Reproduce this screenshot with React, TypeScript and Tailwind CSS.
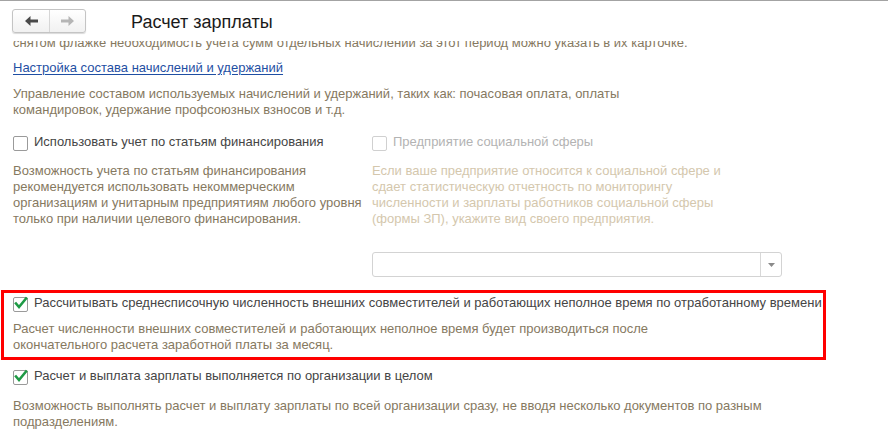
import React from "react";

function Arrow({ dir, color }: { dir: "left" | "right"; color: string }) {
  return (
    <svg width="13" height="10" viewBox="0 0 13 10" className={dir === "right" ? "-scale-x-100" : ""}>
      <polygon points="0,5 5.5,0 5.5,3.5 13,3.5 13,6.5 5.5,6.5 5.5,10" fill={color} />
    </svg>
  );
}

function Checkbox({ checked, disabled }: { checked?: boolean; disabled?: boolean }) {
  return (
    <div
      className={
        "relative mt-[2px] h-[15px] w-[15px] shrink-0 rounded-[2px] border bg-white " +
        (disabled ? "border-[#d0d0d0]" : "border-[#9a9a9a]")
      }
    >
      {checked && (
        <svg width="15" height="15" viewBox="0 0 15 15" className="absolute -left-[1px] -top-[2px]">
          <path d="M3 7.5 L6 11 L13 2.5" stroke="#1e9a45" strokeWidth="2.6" fill="none" strokeLinecap="square" />
        </svg>
      )}
    </div>
  );
}

function Lines({ lines, className }: { lines: string[]; className: string }) {
  return (
    <div className={className}>
      {lines.map((l) => (
        <div key={l} className="whitespace-nowrap">
          {l}
        </div>
      ))}
    </div>
  );
}

export default function App() {
  const note = "text-[#86795f]";
  return (
    <div className="flex h-[434px] w-[888px] flex-col overflow-hidden bg-white font-['Liberation_Sans',Arial,sans-serif] text-[13px] leading-4">
      <div className="flex h-[41px] shrink-0 items-start border-t border-[#a3a3a3] bg-white">
        <div className="ml-[12px] mt-[8px] flex h-[24px] w-[74px] rounded-[3px] border border-[#c4c4c4] bg-gradient-to-b from-white to-[#f1f1f1] shadow-[0_1px_1px_rgba(0,0,0,0.15)]">
          <div className="flex w-[37px] items-center justify-center border-r border-[#d6d6d6]">
            <Arrow dir="left" color="#4a4a4a" />
          </div>
          <div className="flex flex-1 items-center justify-center">
            <Arrow dir="right" color="#b5b5b5" />
          </div>
        </div>
        <div className="ml-[45px] mt-[10px] text-[18px] leading-[22px] text-[#1a1a1a]">Расчет зарплаты</div>
      </div>

      <div className="flex-1 overflow-hidden">
        <div className="-mt-[6px] pl-[13px]">
          <div className={"whitespace-nowrap " + note}>
            снятом флажке необходимость учета сумм отдельных начислений за этот период можно указать в их карточке.
          </div>

          <div className="mt-[9px]">
            <a className="text-[#1f4fa3] underline underline-offset-[2px]">Настройка состава начислений и удержаний</a>
          </div>

          <Lines
            className={"mt-[10px] " + note}
            lines={[
              "Управление составом используемых начислений и удержаний, таких как: почасовая оплата, оплаты",
              "командировок, удержание профсоюзных взносов и т.д.",
            ]}
          />

          <div className="mt-[16px] grid grid-cols-[359px_1fr]">
            <div>
              <div className="flex items-start gap-[6px]">
                <Checkbox />
                <span className="text-[#454545]">Использовать учет по статьям финансирования</span>
              </div>
              <Lines
                className={"mt-[12px] " + note}
                lines={[
                  "Возможность учета по статьям финансирования",
                  "рекомендуется использовать некоммерческим",
                  "организациям и унитарным предприятиям любого уровня",
                  "только при наличии целевого финансирования.",
                ]}
              />
            </div>
            <div>
              <div className="flex items-start gap-[6px]">
                <Checkbox disabled />
                <span className="text-[#b3b3b3]">Предприятие социальной сферы</span>
              </div>
              <Lines
                className="mt-[12px] text-[#d4c7ad]"
                lines={[
                  "Если ваше предприятие относится к социальной сфере и",
                  "сдает статистическую отчетность по мониторингу",
                  "численности и зарплаты работников социальной сферы",
                  "(формы ЗП), укажите вид своего предприятия.",
                ]}
              />
              <div className="mt-[25px] flex h-[25px] w-[410px] rounded-[3px] border border-[#d3d3d3] bg-white">
                <div className="flex-1" />
                <div className="flex w-[21px] items-center justify-center border-l border-[#d8d8d8]">
                  <svg width="7" height="4" viewBox="0 0 7 4">
                    <polygon points="0,0 7,0 3.5,4" fill="#8a8a8a" />
                  </svg>
                </div>
              </div>
            </div>
          </div>
        </div>

        <div className="ml-[1px] mt-[13px] w-[825px] border-[3px] border-[#ff0000] pb-[4px] pl-[9px] pt-[2px]">
          <div className="flex items-start gap-[6px]">
            <Checkbox checked />
            <span className="whitespace-nowrap text-[#454545]">
              Рассчитывать среднесписочную численность внешних совместителей и работающих неполное время по отработанному времени
            </span>
          </div>
          <Lines
            className={"mt-[9px] " + note}
            lines={[
              "Расчет численности внешних совместителей и работающих неполное время будет производиться после",
              "окончательного расчета заработной платы за месяц.",
            ]}
          />
        </div>

        <div className="pl-[13px]">
          <div className="mt-[8px] flex items-start gap-[6px]">
            <Checkbox checked />
            <span className="text-[#454545]">Расчет и выплата зарплаты выполняется по организации в целом</span>
          </div>
          <Lines
            className={"mt-[13px] " + note}
            lines={[
              "Возможность выполнять расчет и выплату зарплаты по всей организации сразу, не вводя несколько документов по разным",
              "подразделениям.",
            ]}
          />
        </div>
      </div>
    </div>
  );
}
